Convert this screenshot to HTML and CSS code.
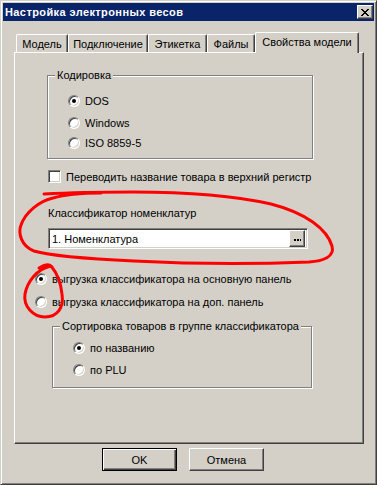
FILE: index.html
```html
<!DOCTYPE html>
<html>
<head>
<meta charset="utf-8">
<link rel="stylesheet" href="styles.css">
</head>
<body>
<div class="window">
  <div class="titlebar">
    <span class="title">Настройка электронных весов</span>
    <span class="close">
      <svg width="8" height="7" viewBox="0 0 8 7"><path d="M0 0h2v1h1v1h2V1h1V0h2v1H7v1H6v1H5v1h1v1h1v1h1v1H6V6H5V5H3v1H2v1H0V6h1V5h1V4h1V3H2V2H1V1H0z" fill="#000"/></svg>
    </span>
  </div>
  <div class="client">
    <div class="tabs">
      <div class="tab">Модель</div>
      <div class="tab">Подключение</div>
      <div class="tab">Этикетка</div>
      <div class="tab">Файлы</div>
      <div class="tab active">Свойства модели</div>
    </div>
    <div class="panel">
      <div class="group enc">
        <div class="legend">Кодировка</div>
        <div class="opt first"><span class="radio on"></span>DOS</div>
        <div class="opt"><span class="radio"></span>Windows</div>
        <div class="opt last"><span class="radio"></span>ISO 8859-5</div>
      </div>
      <div class="check-row"><span class="check"></span>Переводить название товара в верхний регистр</div>
      <div class="field-label">Классификатор номенклатур</div>
      <div class="input"><span class="input-text">1. Номенклатура</span><span class="dots"><svg width="7" height="2" viewBox="0 0 7 2"><path d="M0 0h2v2H0zM3 0h2v2H3zM6 0h1v2H6z" fill="#000"/></svg></span></div>
      <div class="upload first"><span class="radio on"></span>выгрузка классификатора на основную панель</div>
      <div class="upload"><span class="radio"></span>выгрузка классификатора на доп. панель</div>
      <div class="group sort">
        <div class="legend">Сортировка товаров в группе классификатора</div>
        <div class="opt first"><span class="radio on"></span>по названию</div>
        <div class="opt"><span class="radio"></span>по PLU</div>
      </div>
    </div>
    <div class="buttons">
      <div class="btn default"><span class="btn-face">OK</span></div>
      <div class="btn"><span class="btn-face">Отмена</span></div>
    </div>
  </div>
  <svg class="marks" width="377" height="485" viewBox="0 0 377 485">
    <path d="M43 193 C80 191 110 191 132 191 C180 191 230 194 270 203 C305 212 326 228 331 245 C334 256 322 260 308 261 C260 263 190 263 133 260 C90 258 50 255 33 250 C20 245 17 232 20 224 C24 212 38 200 52 197 C62 194 80 192 100 192" fill="none" stroke="#ff0000" stroke-width="3" stroke-linecap="round"/>
    <path d="M38 267 C43 264 48 263 50 265 C35 268 26 282 24 293 C22 305 32 316 44 316 C57 316 63 306 61 293 C60 283 56 272 50 265" fill="none" stroke="#ff0000" stroke-width="3" stroke-linecap="round"/>
  </svg>
</div>
</body>
</html>
```

FILE: styles.css
```css
* { box-sizing: border-box; }
html, body { margin: 0; padding: 0; }
body {
  background: #d4d0c8;
  font-family: "Liberation Sans", Arial, sans-serif;
  font-size: 11px;
  color: #000;
}
.window {
  position: relative;
  width: 377px;
  height: 485px;
  background: #d4d0c8;
  border: 1px solid;
  border-color: #d4d0c8 #404040 #404040 #d4d0c8;
  box-shadow: inset 1px 1px #fff, inset -1px -1px #808080;
  padding: 2px;
}
.titlebar {
  height: 18px;
  background: #0a246a;
  color: #fff;
  font-weight: bold;
  display: flex;
  align-items: center;
  justify-content: space-between;
  padding: 0 1px 0 2px;
}
.title { line-height: 18px; letter-spacing: 0.4px; }
.close {
  width: 16px;
  height: 14px;
  background: #d4d0c8;
  border: 1px solid;
  border-color: #fff #404040 #404040 #fff;
  box-shadow: inset -1px -1px #808080;
  display: flex;
  align-items: center;
  justify-content: center;
  padding-right: 1px;
}
.client { padding-top: 11px; }
.tabs {
  display: flex;
  align-items: flex-end;
  height: 20px;
  margin-left: 13px;
}
.tab {
  height: 18px;
  border: 1px solid;
  border-bottom: none;
  border-color: #fff #404040 #fff #fff;
  box-shadow: inset -1px 0 #808080;
  border-radius: 2px 2px 0 0;
  text-align: center;
  line-height: 17px;
  padding-top: 1px;
}
.tab:nth-child(1) { width: 52px; }
.tab:nth-child(2) { width: 80px; }
.tab:nth-child(3) { width: 59px; }
.tab:nth-child(4) { width: 48px; }
.tab.active {
  width: 104px;
  height: 21px;
  margin-bottom: -1px;
  position: relative;
  z-index: 1;
  background: #d4d0c8;
  padding-top: 0;
  line-height: 18px;
}
.panel {
  margin-left: 11px;
  width: 350px;
  height: 392px;
  border: 1px solid;
  border-color: #fff #404040 #404040 #fff;
  box-shadow: inset -1px -1px #808080;
  display: flex;
  flex-direction: column;
  align-items: flex-start;
}
.group {
  border: 1px solid #808080;
  box-shadow: 1px 1px 0 #fff, inset 1px 1px 0 #fff;
}
.group.enc {
  margin: 22px 0 0 32px;
  width: 266px;
  height: 84px;
}
.group.sort {
  margin: 14px 0 0 37px;
  width: 260px;
  height: 62px;
}
.legend {
  margin: -7px 0 0 7px;
  padding: 0 2px;
  width: fit-content;
  background: #d4d0c8;
  line-height: 13px;
  height: 13px;
}
.opt {
  display: flex;
  align-items: center;
  height: 20px;
  margin-top: 2px;
  padding-left: 20px;
}
.group.enc .opt.first { margin-top: 9px; }
.group.enc .opt.last { margin-top: 0; }
.group.sort .opt.first { margin-top: 5px; }
.radio {
  position: relative;
  width: 12px;
  height: 12px;
  border-radius: 50%;
  border: 1px solid;
  border-color: #808080 #fff #fff #808080;
  box-shadow: inset 1px 1px #404040, inset -1px -1px #d4d0c8;
  background: #fff;
  margin-right: 5px;
  flex: none;
}
.radio.on::after {
  content: "";
  position: absolute;
  left: 3px;
  top: 3px;
  width: 4px;
  height: 4px;
  border-radius: 50%;
  background: #000;
}
.check-row {
  display: flex;
  align-items: center;
  height: 13px;
  margin: 11px 0 0 33px;
}
.check {
  width: 13px;
  height: 13px;
  border: 1px solid;
  border-color: #808080 #fff #fff #808080;
  box-shadow: inset 1px 1px #404040, inset -1px -1px #d4d0c8;
  background: #fff;
  margin-right: 5px;
  flex: none;
}
.field-label {
  margin: 24px 0 0 33px;
  line-height: 13px;
}
.input {
  margin: 8px 0 0 33px;
  width: 260px;
  height: 21px;
  background: #fff;
  border: 1px solid;
  border-color: #808080 #fff #fff #808080;
  box-shadow: inset 1px 1px #404040, inset -1px -1px #d4d0c8;
  display: flex;
  align-items: center;
  justify-content: space-between;
  padding: 2px 2px 2px 3px;
}
.dots {
  width: 16px;
  height: 17px;
  background: #d4d0c8;
  border: 1px solid;
  border-color: #fff #404040 #404040 #fff;
  box-shadow: inset -1px -1px #808080;
  display: flex;
  align-items: center;
  justify-content: center;
  padding-top: 3px;
}
.upload {
  display: flex;
  align-items: center;
  height: 20px;
  margin: 3px 0 0 20px;
}
.upload.first { margin-top: 20px; }
.buttons {
  display: flex;
  gap: 12px;
  margin: 4px 0 0 99px;
}
.btn {
  width: 75px;
  height: 23px;
  border: 1px solid;
  border-color: #fff #404040 #404040 #fff;
  box-shadow: inset -1px -1px #808080;
  display: flex;
}
.btn.default {
  border-color: #000;
  box-shadow: inset 1px 1px #fff, inset -1px -1px #404040, inset -2px -2px #808080;
}
.btn-face {
  flex: 1;
  display: flex;
  align-items: center;
  justify-content: center;
}
.marks {
  position: absolute;
  left: 0;
  top: 0;
  pointer-events: none;
}
```
